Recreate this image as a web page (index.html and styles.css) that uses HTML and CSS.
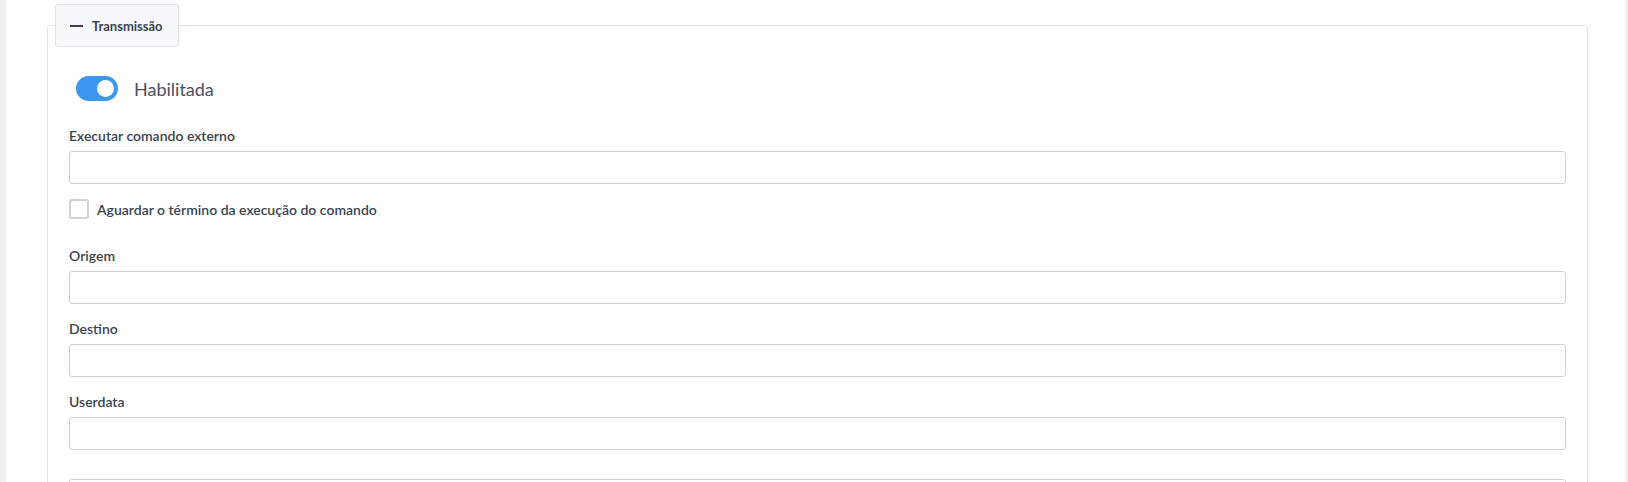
FILE: index.html
```html
<!DOCTYPE html>
<html lang="pt">
<head>
<meta charset="utf-8">
<title>Transmissão</title>
<link rel="stylesheet" href="styles.css">
</head>
<body>
<div class="page">
  <fieldset class="box">
    <legend class="box-legend"><span class="dash"></span><span>Transmissão</span></legend>
    <div class="box-body">
      <div class="switch-row">
        <span class="switch"><span class="knob"></span></span>
        <span class="switch-label">Habilitada</span>
      </div>
      <div class="group first">
        <label class="lbl">Executar comando externo</label>
        <div class="input"></div>
      </div>
      <div class="check-row">
        <span class="checkbox"></span>
        <span class="check-label">Aguardar o término da execução do comando</span>
      </div>
      <div class="group after-check">
        <label class="lbl">Origem</label>
        <div class="input"></div>
      </div>
      <div class="group">
        <label class="lbl">Destino</label>
        <div class="input"></div>
      </div>
      <div class="group">
        <label class="lbl">Userdata</label>
        <div class="input"></div>
      </div>
      <div class="input trailing"></div>
    </div>
  </fieldset>
</div>
</body>
</html>
```
FILE: styles.css
```css
* { box-sizing: border-box; }
html, body { margin: 0; padding: 0; height: 482px; overflow: hidden; }
body {
  background: #efefef;
  font-family: "Lato", "Noto Sans", sans-serif;
  color: #3b4350;
}
.page {
  margin: 0 3px 0 6px;
  background: #fff;
  height: 482px;
  overflow: hidden;
  padding: 4px 37px 0 41px;
}
.box {
  margin: 0;
  padding: 0;
  border: 1px solid #dee2e6;
  border-radius: 4px;
  min-width: 0;
}
.box-legend {
  margin-left: 7px;
  padding: 0 15px 0 14px;
  height: 43px;
  display: flex;
  align-items: center;
  gap: 9px;
  background: #f7f8fa;
  border: 1px solid #dee2e6;
  border-radius: 3px;
  font-size: 13px;
  font-weight: 700;
  color: #3b4350;
}
.dash {
  display: block;
  width: 13px;
  height: 2px;
  background: #3b4350;
}
.box-body {
  padding: 29px 21px 0;
  display: flex;
  flex-direction: column;
}
.switch-row {
  display: flex;
  align-items: center;
  gap: 16px;
  height: 25px;
  padding-left: 7px;
}
.switch {
  width: 42px;
  height: 25px;
  border-radius: 13px;
  background: #3b97ef;
  display: flex;
  align-items: center;
  justify-content: flex-end;
  padding-right: 4px;
}
.knob {
  width: 17px;
  height: 17px;
  border-radius: 50%;
  background: #fff;
}
.switch-label {
  font-size: 18px;
  color: #4a505c;
}
.group { margin-top: 14px; }
.group.first { margin-top: 24px; }
.group.after-check { margin-top: 26px; }
.lbl {
  display: block;
  font-size: 14px;
  line-height: 21px;
  font-weight: 600;
  margin-bottom: 5px;
  color: #3b4350;
}
.input {
  height: 33px;
  border: 1px solid #ced4da;
  border-radius: 3px;
  background: #fff;
}
.input.trailing { margin-top: 29px; }
.check-row {
  margin-top: 15px;
  display: flex;
  align-items: center;
  gap: 8px;
  height: 20px;
}
.checkbox {
  width: 20px;
  height: 20px;
  border: 2px solid #cfd3d8;
  border-radius: 3px;
  background: #fff;
}
.check-label {
  font-size: 14px;
  font-weight: 600;
  color: #3b4350;
}
```
